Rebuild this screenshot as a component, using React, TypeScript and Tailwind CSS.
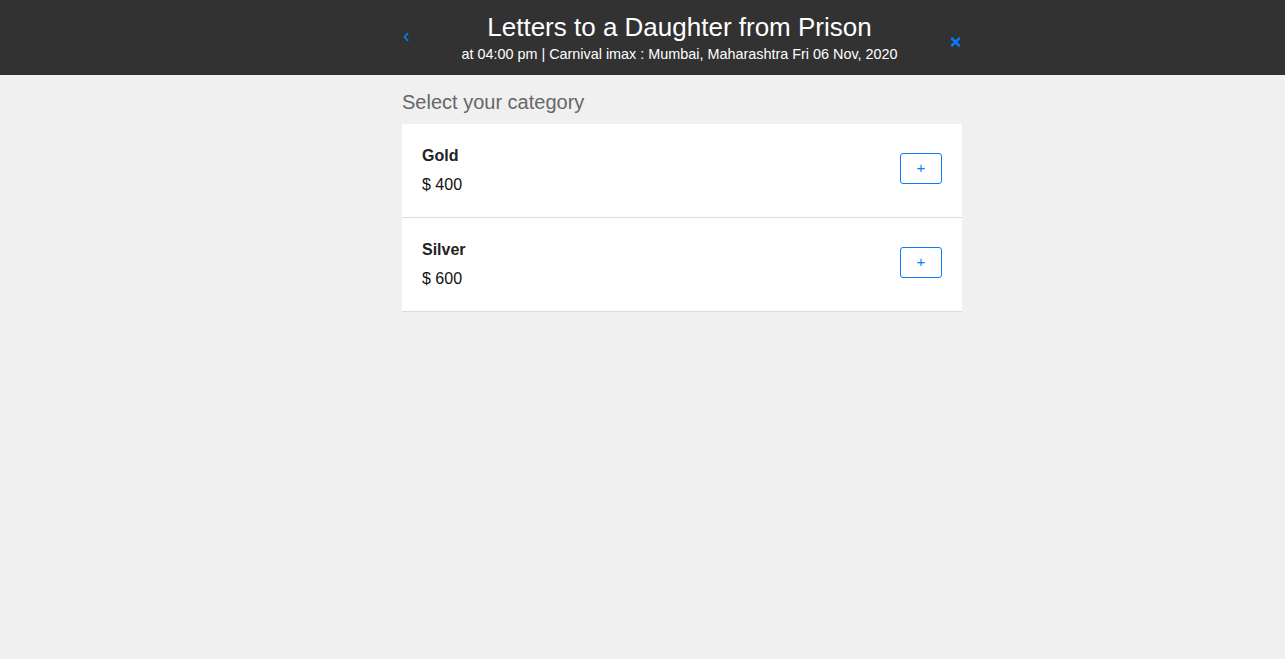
import { FaChevronLeft, FaTimes } from "react-icons/fa";

const categories = [
  { name: "Gold", price: 400 },
  { name: "Silver", price: 600 },
];

export default function App() {
  return (
    <div className="min-h-[659px] bg-[#f0f0f0] font-['Liberation_Sans',Arial,sans-serif]">
      {/* Header */}
      <header className="h-[75px] bg-[#323232]">
        <div className="ml-[402px] flex h-full w-[560px] items-start justify-between">
          <button className="mt-[32px] text-[#0a7bff]" aria-label="Back">
            <FaChevronLeft className="h-[10px] w-[8px]" />
          </button>
          <div className="pt-[12px] text-center text-white">
            <h1 className="text-[26px] leading-[30px]">Letters to a Daughter from Prison</h1>
            <p className="mt-[2px] text-[14.4px] leading-[20px]">
              at 04:00 pm | Carnival imax : Mumbai, Maharashtra Fri 06 Nov, 2020
            </p>
          </div>
          <button className="mt-[35px] text-[#0a7bff]" aria-label="Close">
            <FaTimes className="h-[14px] w-[13px]" />
          </button>
        </div>
      </header>

      {/* Content */}
      <main className="ml-[402px] w-[560px]">
        <h2 className="pt-[15px] pb-[10px] text-[20px] leading-[24px] text-[#666]">
          Select your category
        </h2>
        <div className="bg-white">
          {categories.map((c) => (
            <div
              key={c.name}
              className="flex h-[94px] items-center justify-between border-b border-[#dcdcdc] px-5"
            >
              <div>
                <div className="text-[16px] font-bold leading-[24px] text-[#222]">{c.name}</div>
                <div className="mt-[5px] text-[16px] leading-[24px] text-[#111]">$ {c.price}</div>
              </div>
              <button className="mb-[4px] flex h-[31px] w-[42px] items-center justify-center rounded-[3px] border border-[#0a7bff] text-[15px] text-[#0a7bff]">
                +
              </button>
            </div>
          ))}
        </div>
      </main>
    </div>
  );
}
